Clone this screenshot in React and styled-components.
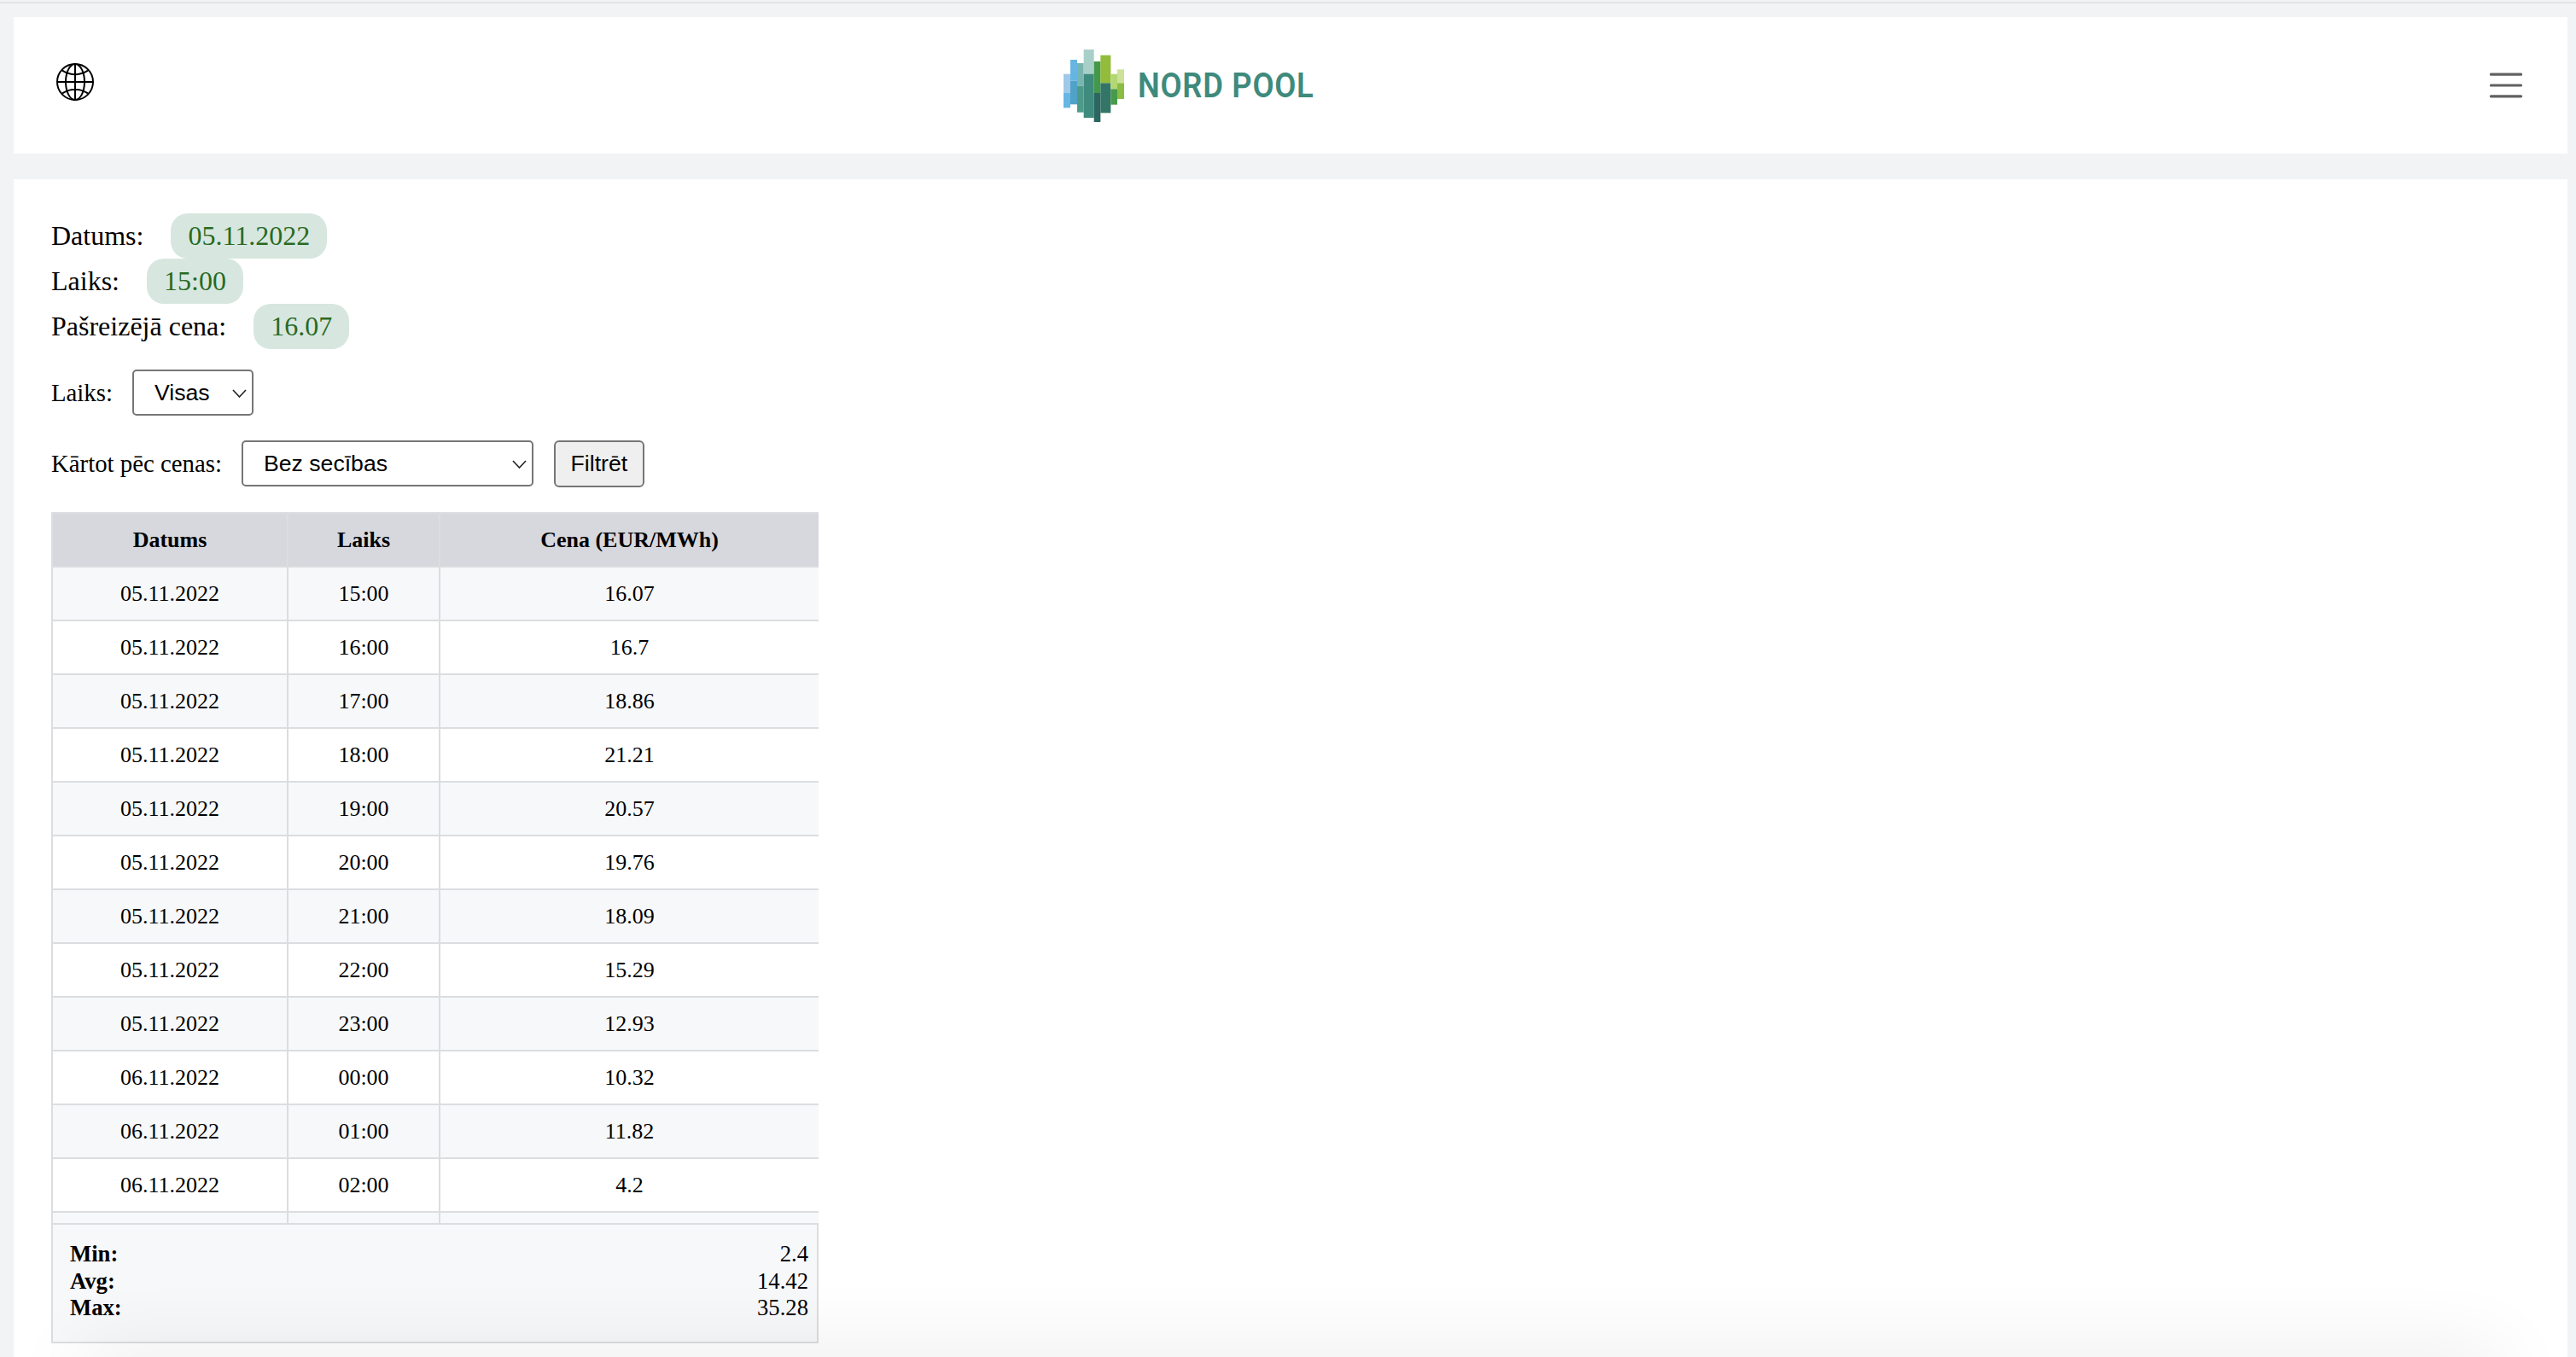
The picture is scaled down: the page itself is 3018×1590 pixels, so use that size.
import React from 'react';
import styled, { createGlobalStyle } from 'styled-components';

const GlobalStyle = createGlobalStyle`
  html, body {
    margin: 0;
    height: 100%;
    overflow: hidden;
    background: #f2f3f5;
  }
  * {
    box-sizing: border-box;
  }
`;

const Page = styled.div`
  height: 1590px;
  padding: 2px 10px 0 16px;
  display: flex;
  flex-direction: column;
  font-family: "Liberation Serif", serif;
  color: #000;
  overflow: hidden;
`;

const TopLine = styled.div`
  height: 2px;
  margin: 0 -10px 16px -16px;
  background: #e3e4e6;
`;

// --- HEADER ---

const Header = styled.header`
  height: 160px;
  flex: none;
  background: #fff;
  display: flex;
  align-items: center;
  padding: 0 48px 0 50px;
`;

const Globe = styled.svg`
  flex: none;
  width: 44px;
  height: 44px;
  margin-bottom: 8px;
`;

const Logo = styled.a`
  display: flex;
  align-items: center;
  gap: 16px;
  margin-left: 1136px;
`;

const LogoText = styled.span`
  display: inline-block;
  font-family: Roboto, sans-serif;
  font-weight: 600;
  font-size: 40px;
  letter-spacing: 0.8px;
  color: #3e8a7c;
  white-space: nowrap;
  transform: scaleX(0.91);
  transform-origin: left center;
`;

const Burger = styled.svg`
  width: 48px;
  height: 48px;
  margin-left: auto;
`;

// --- CONTENT ---

const Panel = styled.main`
  position: relative;
  flex: 1;
  margin-top: 30px;
  padding: 40px 44px 0;
  background: #fff;
  overflow: hidden;
`;

const InfoRow = styled.div`
  display: flex;
  align-items: center;
  gap: 32px;
  font-size: 32px;
  height: 53px;
`;

const Pill = styled.span`
  padding: 8px 20px;
  border-radius: 20px;
  background: #d7e7e0;
  color: #2a6a1f;
`;

const FilterRow = styled.form`
  display: flex;
  align-items: center;
  height: 54px;
  margin-top: ${(p) => p.$top}px;
  font-size: 28.8px;
`;

const FilterLabel = styled.label`
  margin-right: 23px;
`;

const SelectWrap = styled.span`
  position: relative;
  display: block;
  width: ${(p) => p.$width}px;
  height: 54px;
`;

const Select = styled.select`
  appearance: none;
  width: 100%;
  height: 100%;
  padding: 0 0 0 24px;
  border: 2px solid #767676;
  border-radius: 5px;
  background: #fff;
  color: #000;
  font-family: "Liberation Sans", sans-serif;
  font-size: 26.67px;
`;

const Chevron = styled.svg`
  position: absolute;
  right: 8px;
  top: 23px;
  width: 17px;
  height: 10px;
  pointer-events: none;
`;

const FilterButton = styled.button`
  width: 106px;
  height: 55px;
  margin-left: 24px;
  padding: 0;
  border: 2px solid #767676;
  border-radius: 6px;
  background: #efefef;
  color: #000;
  font-family: "Liberation Sans", sans-serif;
  font-size: 26.67px;
`;

const TableBox = styled.div`
  width: 899px;
  margin-top: 30px;
`;

const TableScroll = styled.div`
  height: 833px;
  overflow: hidden;
`;

const PriceTable = styled.table`
  width: 100%;
  table-layout: fixed;
  border-collapse: collapse;
  font-size: 26px;
`;

const HeadCell = styled.th`
  height: 63px;
  padding: 0;
  background: #d7d8dd;
  border: 2px solid #dcdde0;
  font-weight: 700;
  text-align: center;
`;

const Row = styled.tr`
  background: ${(p) => (p.$odd ? '#f7f8fa' : '#fff')};
`;

const Cell = styled.td`
  height: 63px;
  padding: 0;
  border: 2px solid #dcdde0;
  text-align: center;
`;

const Summary = styled.div`
  height: 141px;
  padding: 19px 10px 0 20px;
  background: #f7f8fa;
  border: 2px solid #dcdde0;
  font-size: 26.67px;
  line-height: 31.5px;
`;

const SummaryRow = styled.div`
  display: flex;
  justify-content: space-between;
`;

// sits just under the panel, only its shadow shows at the bottom of the page
const BottomShadow = styled.div`
  position: absolute;
  left: 80px;
  right: 80px;
  top: 100%;
  height: 40px;
  box-shadow: 0 0 90px rgba(0, 0, 0, 0.12);
  pointer-events: none;
`;

// --- DATA ---

const prices = [
  ['05.11.2022', '15:00', '16.07'],
  ['05.11.2022', '16:00', '16.7'],
  ['05.11.2022', '17:00', '18.86'],
  ['05.11.2022', '18:00', '21.21'],
  ['05.11.2022', '19:00', '20.57'],
  ['05.11.2022', '20:00', '19.76'],
  ['05.11.2022', '21:00', '18.09'],
  ['05.11.2022', '22:00', '15.29'],
  ['05.11.2022', '23:00', '12.93'],
  ['06.11.2022', '00:00', '10.32'],
  ['06.11.2022', '01:00', '11.82'],
  ['06.11.2022', '02:00', '4.2'],
  ['', '', ''],
];

const logoBars = [
  [138, 168, 24, 67, '#a0c8e8'],
  [138, 235, 24, 52, '#68b6e4'],
  [162, 118, 24, 74, '#66b5e3'],
  [162, 192, 24, 83, '#4fa2c8'],
  [186, 130, 23, 80, '#79b5b0'],
  [186, 210, 23, 93, '#4e9a8a'],
  [209, 82, 36, 86, '#a9d0c8'],
  [209, 168, 36, 154, '#3f8b7d'],
  [245, 124, 23, 111, '#43984a'],
  [245, 235, 23, 102, '#2b6660'],
  [268, 102, 36, 98, '#92bc3a'],
  [268, 200, 36, 105, '#337566'],
  [304, 168, 23, 53, '#b3d873'],
  [304, 221, 23, 55, '#479a4a'],
  [327, 152, 24, 48, '#cde298'],
  [327, 200, 24, 56, '#8bbd42'],
];

const ChevronIcon = () => (
  <Chevron viewBox="0 0 17 10" fill="none" stroke="#222" strokeWidth="1.6">
    <path d="M1 1l7.5 8L16 1" />
  </Chevron>
);

const App = () => (
  <>
    <GlobalStyle />
    <Page>
      <TopLine />
      <Header>
        <Globe viewBox="0 0 44 44" fill="none" stroke="#000" strokeWidth="2">
          <circle cx="22" cy="22" r="21" />
          <ellipse cx="22" cy="22" rx="11" ry="21" />
          <path d="M1 22h42M22 1v42M7 8.7Q22 18 37 8.7M7 35.3Q22 26 37 35.3" />
        </Globe>
        <Logo>
          <svg width="71" height="85" viewBox="138 82 213 255">
            {logoBars.map(([x, y, w, h, fill]) => (
              <rect key={`${x}-${y}`} x={x} y={y} width={w} height={h} fill={fill} />
            ))}
          </svg>
          <LogoText>NORD POOL</LogoText>
        </Logo>
        <Burger viewBox="0 0 30 30">
          <path
            d="M4 7h22M4 15h22M4 23h22"
            stroke="rgba(0,0,0,.62)"
            strokeWidth="2"
            strokeLinecap="round"
          />
        </Burger>
      </Header>

      <Panel>
        <InfoRow>
          Datums: <Pill>05.11.2022</Pill>
        </InfoRow>
        <InfoRow>
          Laiks: <Pill>15:00</Pill>
        </InfoRow>
        <InfoRow>
          Pašreizējā cena: <Pill>16.07</Pill>
        </InfoRow>

        <FilterRow $top={24}>
          <FilterLabel>Laiks:</FilterLabel>
          <SelectWrap $width={142}>
            <Select defaultValue="all">
              <option value="all">Visas</option>
            </Select>
            <ChevronIcon />
          </SelectWrap>
        </FilterRow>

        <FilterRow $top={29}>
          <FilterLabel>Kārtot pēc cenas:</FilterLabel>
          <SelectWrap $width={342}>
            <Select defaultValue="none">
              <option value="none">Bez secības</option>
            </Select>
            <ChevronIcon />
          </SelectWrap>
          <FilterButton type="button">Filtrēt</FilterButton>
        </FilterRow>

        <TableBox>
          <TableScroll>
            <PriceTable>
              <colgroup>
                <col width="276" />
                <col width="178" />
                <col width="445" />
              </colgroup>
              <thead>
                <tr>
                  <HeadCell>Datums</HeadCell>
                  <HeadCell>Laiks</HeadCell>
                  <HeadCell>Cena (EUR/MWh)</HeadCell>
                </tr>
              </thead>
              <tbody>
                {prices.map(([date, time, price], i) => (
                  <Row key={i} $odd={i % 2 === 0}>
                    <Cell>{date}</Cell>
                    <Cell>{time}</Cell>
                    <Cell>{price}</Cell>
                  </Row>
                ))}
              </tbody>
            </PriceTable>
          </TableScroll>
          <Summary>
            <SummaryRow>
              <b>Min:</b>
              <span>2.4</span>
            </SummaryRow>
            <SummaryRow>
              <b>Avg:</b>
              <span>14.42</span>
            </SummaryRow>
            <SummaryRow>
              <b>Max:</b>
              <span>35.28</span>
            </SummaryRow>
          </Summary>
        </TableBox>
        <BottomShadow />
      </Panel>
    </Page>
  </>
);

export default App;
